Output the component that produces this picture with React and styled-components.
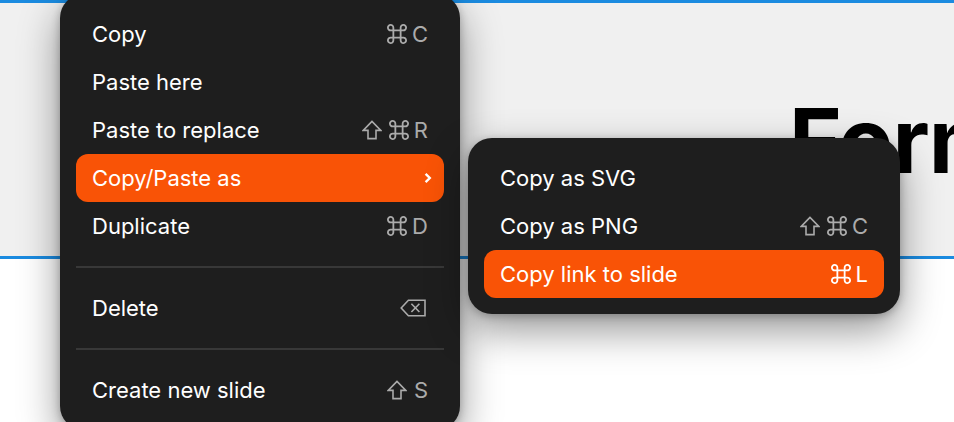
import React from "react";
import styled, { createGlobalStyle } from "styled-components";

const GlobalStyle = createGlobalStyle`
  html, body {
    margin: 0;
    padding: 0;
    background: #ffffff;
    overflow: hidden;
  }
  body {
    font-family: "Inter", "Liberation Sans", sans-serif;
  }
`;

const Page = styled.div`
  position: relative;
  width: 954px;
  height: 422px;
  overflow: hidden;
  background: #ffffff;
`;

const Slide = styled.div`
  box-sizing: border-box;
  height: 259px;
  padding: 88px 0 0 789px;
  background: #f0f0f0;
  border-top: 3px solid #1b8be0;
  border-bottom: 3px solid #1b8be0;
  overflow: hidden;
`;

const Title = styled.h1`
  margin: 0;
  font-size: 90px;
  line-height: 100px;
  font-weight: 700;
  letter-spacing: -1px;
  color: #000000;
  white-space: nowrap;
`;

const Menu = styled.div`
  position: absolute;
  box-sizing: border-box;
  top: ${(p) => p.$top}px;
  left: ${(p) => p.$left}px;
  width: ${(p) => p.$width}px;
  padding: 16px;
  background: #1e1e1e;
  border-radius: 24px;
  box-shadow: 0 16px 40px rgba(0, 0, 0, 0.42), 0 2px 8px rgba(0, 0, 0, 0.25);
`;

const Row = styled.div`
  display: flex;
  align-items: center;
  justify-content: space-between;
  height: 48px;
  padding: 0 16px;
  border-radius: 12px;
  font-size: 22px;
  letter-spacing: 0;
  color: #ffffff;
  background: ${(p) => (p.$active ? "#f95306" : "transparent")};
`;

const Keys = styled.span`
  display: flex;
  align-items: center;
  gap: 5px;
  color: ${(p) => (p.$active ? "#ffffff" : "#ababab")};
`;

const Divider = styled.div`
  height: 2px;
  margin: 16px 0;
  background: #383838;
`;

const Icon = styled.svg`
  display: block;
  flex: none;
  fill: none;
  stroke: currentColor;
  stroke-width: 1.6;
`;

const ShiftSvg = styled(Icon)`
  margin-right: 2px;
`;

const BackSvg = styled(Icon)`
  margin-right: 2px;
`;

const ChevronSvg = styled(Icon)`
  margin-right: -4px;
  stroke-width: 2.4;
`;

const CommandIcon = () => (
  <Icon width="20" height="20" viewBox="1.2 1.2 17.6 17.6">
    <path d="M6.8 6.8h6.4v6.4H6.8zM6.8 6.8H4.6a2.4 2.4 0 1 1 2.2-2.4v2.4zM13.2 6.8V4.4a2.4 2.4 0 1 1 2.2 2.4h-2.2zM13.2 13.2h2.2a2.4 2.4 0 1 1-2.2 2.4v-2.4zM6.8 13.2v2.4a2.4 2.4 0 1 1-2.2-2.4h2.2z" />
  </Icon>
);

const ShiftIcon = () => (
  <ShiftSvg width="20" height="20" viewBox="0 0 20 20">
    <path d="M10 1.4 1.2 10.4h4.8v8.2h8v-8.2h4.8z" />
  </ShiftSvg>
);

const BackspaceIcon = () => (
  <BackSvg width="26" height="18" viewBox="0 0 26 18">
    <path d="M25 1.2H8.4L1.2 9l7.2 7.8H25zM11.4 4.8l8 8.2M19.4 4.8l-8 8.2" />
  </BackSvg>
);

const Chevron = () => (
  <ChevronSvg width="8" height="12" viewBox="0 0 8 12">
    <path d="M1.6 1.8 5.8 6l-4.2 4.2" />
  </ChevronSvg>
);

const mainTop = [
  { label: "Copy", cmd: true, key: "C" },
  { label: "Paste here" },
  { label: "Paste to replace", shift: true, cmd: true, key: "R" },
  { label: "Copy/Paste as", active: true, arrow: true },
  { label: "Duplicate", cmd: true, key: "D" },
];

const subItems = [
  { label: "Copy as SVG" },
  { label: "Copy as PNG", shift: true, cmd: true, key: "C" },
  { label: "Copy link to slide", active: true, cmd: true, key: "L" },
];

function MenuRow({ item }) {
  const hasKeys = item.shift || item.cmd || item.key || item.arrow || item.back;
  return (
    <Row $active={item.active}>
      <span>{item.label}</span>
      {hasKeys && (
        <Keys $active={item.active}>
          {item.shift && <ShiftIcon />}
          {item.cmd && <CommandIcon />}
          {item.key && <span>{item.key}</span>}
          {item.back && <BackspaceIcon />}
          {item.arrow && <Chevron />}
        </Keys>
      )}
    </Row>
  );
}

export default function App() {
  return (
    <Page>
      <GlobalStyle />
      <Slide>
        <Title>Form</Title>
      </Slide>
      <Menu $top={-6} $left={60} $width={400}>
        {mainTop.map((item) => (
          <MenuRow key={item.label} item={item} />
        ))}
        <Divider />
        <MenuRow item={{ label: "Delete", back: true }} />
        <Divider />
        <MenuRow item={{ label: "Create new slide", shift: true, key: "S" }} />
      </Menu>
      <Menu $top={138} $left={468} $width={432}>
        {subItems.map((item) => (
          <MenuRow key={item.label} item={item} />
        ))}
      </Menu>
    </Page>
  );
}
